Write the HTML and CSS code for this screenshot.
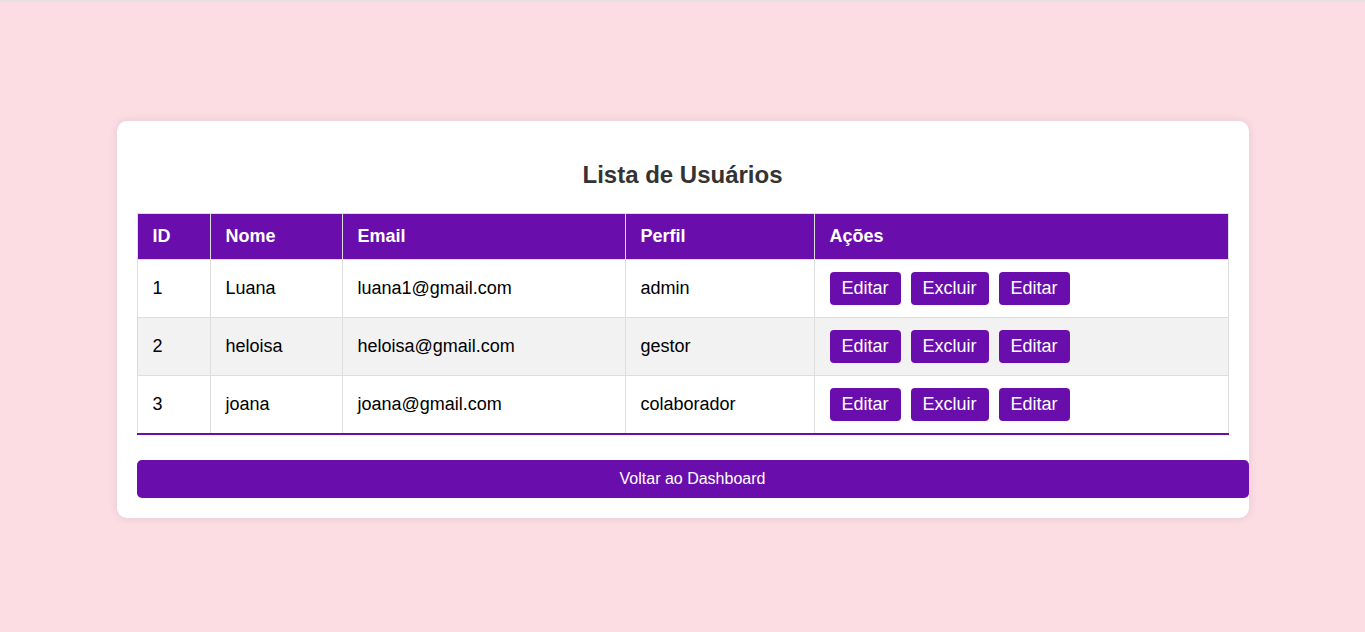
FILE: index.html
```html
<!DOCTYPE html>
<html lang="pt-BR">
<head>
<meta charset="UTF-8">
<title>Lista de Usuários</title>
<link rel="stylesheet" href="styles.css">
</head>
<body>
<div class="card">
  <h2 class="title">Lista de Usuários</h2>
  <table class="users">
    <colgroup>
      <col class="c-id"><col class="c-nome"><col class="c-email"><col class="c-perfil"><col class="c-acoes">
    </colgroup>
    <thead>
      <tr><th>ID</th><th>Nome</th><th>Email</th><th>Perfil</th><th>Ações</th></tr>
    </thead>
    <tbody>
      <tr><td>1</td><td>Luana</td><td>luana1@gmail.com</td><td>admin</td><td><button class="btn">Editar</button><button class="btn">Excluir</button><button class="btn">Editar</button></td></tr>
      <tr class="alt"><td>2</td><td>heloisa</td><td>heloisa@gmail.com</td><td>gestor</td><td><button class="btn">Editar</button><button class="btn">Excluir</button><button class="btn">Editar</button></td></tr>
      <tr><td>3</td><td>joana</td><td>joana@gmail.com</td><td>colaborador</td><td><button class="btn">Editar</button><button class="btn">Excluir</button><button class="btn">Editar</button></td></tr>
    </tbody>
  </table>
  <button class="back">Voltar ao Dashboard</button>
</div>
</body>
</html>
```
FILE: styles.css
```css
html {
  border-top: 2px solid #e7e3e4;
}
body {
  margin: 0;
  padding-top: 119px;
  background: #fddde4;
  font-family: "Liberation Sans", Arial, sans-serif;
  min-height: 500px;
}
.card {
  width: 80%;
  margin: 0 auto;
  background: #fff;
  padding: 20px;
  border-radius: 10px;
  box-shadow: 0 0 10px rgba(0, 0, 0, 0.1);
}
.title {
  font-size: 24px;
  font-weight: bold;
  color: #333;
  text-align: center;
  margin: 20px 0 24px;
}
.users {
  width: 100%;
  border-collapse: collapse;
}
.c-id { width: 73px; }
.c-nome { width: 132px; }
.c-email { width: 283px; }
.c-perfil { width: 189px; }
.users th {
  background: #6a0dad;
  color: #fff;
  text-align: left;
  font-size: 18px;
  font-weight: bold;
  padding: 12px 15px;
  border: 1px solid #ddd;
}
.users td {
  text-align: left;
  font-size: 18px;
  color: #000;
  padding: 12px 15px;
  border: 1px solid #ddd;
}
.users tbody tr:last-child td {
  border-bottom: 2px solid #6a0dad;
}
.users tr.alt td {
  background: #f2f2f2;
}
.btn {
  background: #6a0dad;
  color: #fff;
  border: none;
  border-radius: 4px;
  font-family: "Liberation Sans", Arial, sans-serif;
  font-size: 18px;
  padding: 6px 12px;
  margin-right: 10px;
  cursor: pointer;
}
.back {
  display: block;
  width: 100%;
  box-sizing: content-box;
  margin-top: 25px;
  padding: 10px;
  background: #6a0dad;
  color: #fff;
  border: none;
  border-radius: 5px;
  font-family: "Liberation Sans", Arial, sans-serif;
  font-size: 16px;
  cursor: pointer;
}
```
